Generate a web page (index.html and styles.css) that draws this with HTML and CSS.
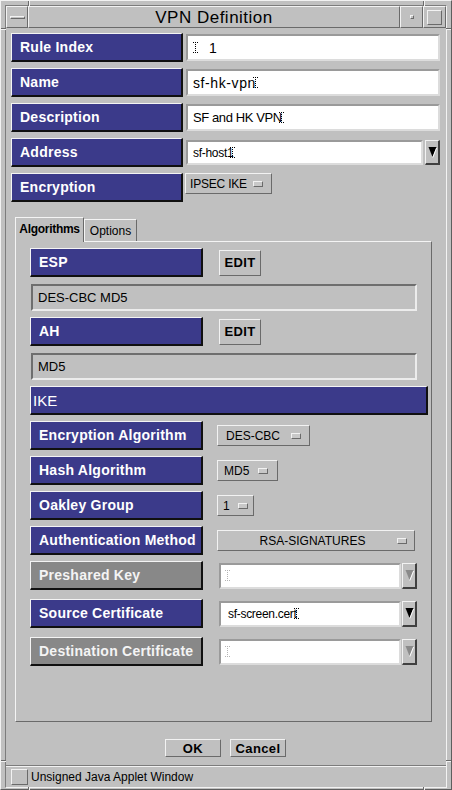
FILE: index.html
```html
<!DOCTYPE html>
<html>
<head>
<meta charset="utf-8">
<title>VPN Definition</title>
<link rel="stylesheet" href="styles.css">
</head>
<body>
<div class="window">
  <div class="inner">
    <div class="titlebar">
      <div class="tb tb-menu"><span class="tb-dash"></span></div>
      <div class="tb tb-title">VPN Definition</div>
      <div class="tb tb-min"><span class="tb-dot"></span></div>
      <div class="tb tb-max"><span class="tb-sq"></span></div>
    </div>
    <div class="client">
      <div class="form">
        <div class="row">
          <div class="label">Rule Index</div>
          <div class="field">
            <svg class="ibeam" width="5" height="11" viewBox="0 0 5 11"><path d="M0 0.5H5M2.5 0V11M0 10.5H5" stroke="#000" stroke-dasharray="1 1"/></svg>
            <span class="v-one">1</span>
          </div>
        </div>
        <div class="row">
          <div class="label">Name</div>
          <div class="field"><span class="v-name">sf-hk-vpn</span><svg class="ibeam tail" width="5" height="11" viewBox="0 0 5 11"><path d="M0 0.5H5M2.5 0V11M0 10.5H5" stroke="#000" stroke-dasharray="1 1"/></svg></div>
        </div>
        <div class="row">
          <div class="label">Description</div>
          <div class="field"><span class="v-desc">SF and HK VPN</span><svg class="ibeam tail" width="5" height="11" viewBox="0 0 5 11"><path d="M0 0.5H5M2.5 0V11M0 10.5H5" stroke="#000" stroke-dasharray="1 1"/></svg></div>
        </div>
        <div class="row">
          <div class="label">Address</div>
          <div class="combo">
            <div class="field cfield"><span class="v-small">sf-host1</span><svg class="ibeam tail" width="5" height="11" viewBox="0 0 5 11"><path d="M0 0.5H5M2.5 0V11M0 10.5H5" stroke="#000" stroke-dasharray="1 1"/></svg></div>
            <div class="drop"><svg width="11" height="14" viewBox="0 0 11 14"><polygon points="1.5,2 9.5,2 5.5,12" fill="#000"/><line x1="9.6" y1="3" x2="5.8" y2="12.5" stroke="#fff" stroke-width="1"/></svg></div>
          </div>
        </div>
        <div class="row top">
          <div class="label">Encryption</div>
          <div class="choice c-enc"><span class="ctext">IPSEC IKE</span><span class="ind"></span></div>
        </div>
      </div>

      <div class="tabs">
        <div class="tab sel">Algorithms</div>
        <div class="tab opt">Options</div>
      </div>
      <div class="panel">
        <div class="prow">
          <div class="label plabel">ESP</div>
          <div class="btn edit">EDIT</div>
        </div>
        <div class="ro">DES-CBC MD5</div>
        <div class="prow g6">
          <div class="label plabel">AH</div>
          <div class="btn edit">EDIT</div>
        </div>
        <div class="ro">MD5</div>
        <div class="ike">IKE</div>
        <div class="prow g6">
          <div class="label plabel">Encryption Algorithm</div>
          <div class="choice c-des"><span class="ctext">DES-CBC</span><span class="ind"></span></div>
        </div>
        <div class="prow g6">
          <div class="label plabel">Hash Algorithm</div>
          <div class="choice c-md5"><span class="ctext">MD5</span><span class="ind"></span></div>
        </div>
        <div class="prow g6">
          <div class="label plabel">Oakley Group</div>
          <div class="choice c-one"><span class="ctext">1</span><span class="ind"></span></div>
        </div>
        <div class="prow g6">
          <div class="label plabel">Authentication Method</div>
          <div class="choice c-auth"><span class="ctext">RSA-SIGNATURES</span><span class="ind"></span></div>
        </div>
        <div class="prow g6">
          <div class="label plabel disabled">Preshared Key</div>
          <div class="combo pcombo">
            <div class="field cfield"><svg class="ibeam" width="5" height="11" viewBox="0 0 5 11"><path d="M0 0.5H5M2.5 0V11M0 10.5H5" stroke="#b4b4b4" stroke-dasharray="1 1"/></svg></div>
            <div class="drop"><svg width="11" height="14" viewBox="0 0 11 14"><polygon points="1.5,2 9.5,2 5.5,12" fill="#8a8a8a"/><line x1="9.6" y1="3" x2="5.8" y2="12.5" stroke="#fff" stroke-width="1"/></svg></div>
          </div>
        </div>
        <div class="prow g9">
          <div class="label plabel">Source Certificate</div>
          <div class="combo pcombo">
            <div class="field cfield"><span class="v-small">sf-screen.cert</span><svg class="ibeam tail" width="5" height="11" viewBox="0 0 5 11"><path d="M0 0.5H5M2.5 0V11M0 10.5H5" stroke="#000" stroke-dasharray="1 1"/></svg></div>
            <div class="drop"><svg width="11" height="14" viewBox="0 0 11 14"><polygon points="1.5,2 9.5,2 5.5,12" fill="#000"/><line x1="9.6" y1="3" x2="5.8" y2="12.5" stroke="#fff" stroke-width="1"/></svg></div>
          </div>
        </div>
        <div class="prow g9">
          <div class="label plabel disabled">Destination Certificate</div>
          <div class="combo pcombo">
            <div class="field cfield"><svg class="ibeam" width="5" height="11" viewBox="0 0 5 11"><path d="M0 0.5H5M2.5 0V11M0 10.5H5" stroke="#b4b4b4" stroke-dasharray="1 1"/></svg></div>
            <div class="drop"><svg width="11" height="14" viewBox="0 0 11 14"><polygon points="1.5,2 9.5,2 5.5,12" fill="#8a8a8a"/><line x1="9.6" y1="3" x2="5.8" y2="12.5" stroke="#fff" stroke-width="1"/></svg></div>
          </div>
        </div>
      </div>

      <div class="btns">
        <div class="btn dlg">OK</div>
        <div class="btn dlg">Cancel</div>
      </div>
    </div>
    <div class="status">
      <span class="st-box"></span>
      <span class="st-text">Unsigned Java Applet Window</span>
    </div>
  </div>
  <span class="mark mv m-t1"></span>
  <span class="mark mv m-t2"></span>
  <span class="mark mv m-b1"></span>
  <span class="mark mv m-b2"></span>
  <span class="mark mh m-l1"></span>
  <span class="mark mh m-l2"></span>
  <span class="mark mh m-r1"></span>
  <span class="mark mh m-r2"></span>
</div>
</body>
</html>
```

FILE: styles.css
```css
html, body {
  margin: 0;
  padding: 0;
  background: #c0c0c0;
  font-family: "Liberation Sans", Arial, sans-serif;
  color: #000;
}

.window {
  position: relative;
  width: 452px;
  height: 790px;
  box-sizing: border-box;
  border: 1px solid;
  border-color: #f2f2f2 #5e5e5e #5e5e5e #f2f2f2;
  padding: 4px 4px 1px 4px;
  background: #c0c0c0;
}

.inner {
  height: 100%;
  box-sizing: border-box;
  border: 1px solid;
  border-color: #7c7c7c #f2f2f2 #f2f2f2 #7c7c7c;
  display: flex;
  flex-direction: column;
}

/* title bar */
.titlebar {
  display: flex;
  height: 22px;
  flex: none;
}
.tb {
  box-sizing: border-box;
  height: 22px;
  border: 1px solid;
  border-color: #f2f2f2 #6a6a6a #6a6a6a #f2f2f2;
  display: flex;
  align-items: center;
  justify-content: center;
}
.tb-menu { width: 22px; }
.tb-title {
  flex: 1;
  font-size: 17px;
  letter-spacing: 0.5px;
  padding-top: 1px;
}
.tb-min { width: 23px; }
.tb-max { width: 23px; }
.tb-dash {
  width: 15px;
  height: 3px;
  box-sizing: border-box;
  border: 1px solid;
  border-color: #f2f2f2 #6a6a6a #6a6a6a #f2f2f2;
}
.tb-dot {
  width: 4px;
  height: 4px;
  box-sizing: border-box;
  border: 1px solid;
  border-color: #f2f2f2 #6a6a6a #6a6a6a #f2f2f2;
}
.tb-sq {
  width: 15px;
  height: 15px;
  box-sizing: border-box;
  border: 1px solid;
  border-color: #f2f2f2 #6a6a6a #6a6a6a #f2f2f2;
}

/* client */
.client {
  flex: 1;
  display: flex;
  flex-direction: column;
  padding: 5px 6px 0 5px;
}

.form {
  display: flex;
  flex-direction: column;
  gap: 6px;
}
.row {
  display: flex;
  align-items: center;
  height: 29px;
}
.row.top { align-items: flex-start; }

.label {
  box-sizing: border-box;
  flex: none;
  width: 172px;
  height: 29px;
  background: #3b3a8a;
  color: #fff;
  font-weight: bold;
  font-size: 14px;
  letter-spacing: 0.25px;
  padding-left: 8px;
  display: flex;
  align-items: center;
  white-space: nowrap;
  border-style: solid;
  border-width: 1px 2px 2px 1px;
  border-color: #f4f4f4 #101010 #101010 #f4f4f4;
}
.label.disabled {
  background: #888888;
  color: #f4f4f4;
}

.field {
  box-sizing: border-box;
  flex: 1;
  margin-left: 3px;
  height: 27px;
  background: #fff;
  border: 2px solid;
  border-color: #9a9a9a #dcdcdc #dcdcdc #9a9a9a;
  display: flex;
  align-items: center;
  padding-left: 5px;
  font-size: 14px;
  white-space: nowrap;
}

.ibeam { flex: none; display: block; }
.ibeam.tail { margin-left: -3px; }
.v-one { margin-left: 11px; }
.v-name { letter-spacing: 0.6px; }
.v-desc { font-size: 13px; letter-spacing: -0.4px; }
.v-small { font-size: 12px; letter-spacing: -0.3px; }

.combo {
  flex: 1;
  display: flex;
  align-items: center;
  margin-left: 3px;
  height: 25px;
}
.combo .cfield {
  margin-left: 0;
  height: 25px;
}
.drop {
  box-sizing: border-box;
  flex: none;
  width: 15px;
  height: 25px;
  margin-left: 2px;
  border-style: solid;
  border-width: 1px 2px 2px 1px;
  border-color: #f2f2f2 #404040 #404040 #f2f2f2;
  display: flex;
  align-items: center;
  justify-content: center;
}

/* option menu (choice) */
.choice {
  box-sizing: border-box;
  flex: none;
  height: 21px;
  border: 1px solid;
  border-color: #f2f2f2 #6a6a6a #6a6a6a #f2f2f2;
  display: flex;
  align-items: center;
  font-size: 12px;
  white-space: nowrap;
}
.ind {
  flex: none;
  box-sizing: border-box;
  width: 10px;
  height: 6px;
  border: 1px solid;
  border-color: #f2f2f2 #6a6a6a #6a6a6a #f2f2f2;
  background: #c8c8c8;
}
.c-enc { margin-left: 2px; width: 87px; padding-left: 4px; }
.c-enc .ctext { letter-spacing: -0.2px; margin-right: 6px; }
.c-des { margin-left: 14px; width: 93px; padding-left: 8px; }
.c-des .ctext { margin-right: 11px; }
.c-md5 { margin-left: 14px; width: 61px; padding-left: 6px; }
.c-md5 .ctext { margin-right: 9px; }
.c-one { margin-left: 14px; width: 37px; padding-left: 5px; }
.c-one .ctext { margin-right: 8px; }
.c-auth { margin-left: 14px; width: 198px; padding-right: 7px; }
.c-auth .ctext { flex: 1; text-align: center; padding-left: 10px; }

/* tabs */
.tabs {
  display: flex;
  align-items: flex-end;
  margin: 15px 0 0 4px;
  height: 24px;
  flex: none;
}
.tab {
  box-sizing: border-box;
  border-style: solid;
  border-width: 1px 1px 0 1px;
  border-color: #f4f4f4 #6a6a6a transparent #f4f4f4;
  font-size: 12px;
  display: flex;
  align-items: center;
  justify-content: center;
  background: #c0c0c0;
}
.tab.sel {
  width: 69px;
  height: 25px;
  font-weight: bold;
  letter-spacing: -0.3px;
  position: relative;
  z-index: 1;
  margin-bottom: -1px;
  padding-bottom: 2px;
}
.tab.opt {
  width: 53px;
  height: 22px;
  padding-top: 1px;
}

.panel {
  box-sizing: border-box;
  flex: none;
  height: 481px;
  margin: 0 8px 0 4px;
  border: 1px solid;
  border-color: #f4f4f4 #6a6a6a #6a6a6a #f4f4f4;
  padding: 6px 0 0 14px;
  display: flex;
  flex-direction: column;
}
.prow {
  display: flex;
  align-items: center;
  height: 29px;
  flex: none;
}
.prow.g6 { margin-top: 6px; }
.prow.g9 { margin-top: 9px; }
.plabel { width: 173px; }

.btn {
  box-sizing: border-box;
  border: 1px solid;
  border-color: #f2f2f2 #6a6a6a #6a6a6a #f2f2f2;
  display: flex;
  align-items: center;
  justify-content: center;
  font-weight: bold;
  font-size: 13px;
  letter-spacing: 0.4px;
}
.edit {
  margin-left: 16px;
  width: 42px;
  height: 26px;
}

.ro {
  box-sizing: border-box;
  flex: none;
  margin: 7px 0 0 1px;
  width: 386px;
  height: 27px;
  border: 2px solid;
  border-color: #6e6e6e #ececec #ececec #6e6e6e;
  font-size: 13px;
  display: flex;
  align-items: center;
  padding-left: 5px;
}

.ike {
  box-sizing: border-box;
  flex: none;
  margin-top: 6px;
  width: 398px;
  height: 29px;
  background: #3b3a8a;
  color: #fff;
  font-size: 15px;
  display: flex;
  align-items: center;
  padding-left: 2px;
  border-style: solid;
  border-width: 1px 2px 2px 1px;
  border-color: #f4f4f4 #101010 #101010 #f4f4f4;
}

.pcombo {
  margin-left: 16px;
  flex: none;
  width: 198px;
  height: 26px;
}
.pcombo .cfield { height: 26px; padding-left: 4px; }
.pcombo .v-small { padding-left: 3px; }
.pcombo .drop { margin-left: 1px; height: 26px; }

/* dialog buttons */
.btns {
  display: flex;
  justify-content: center;
  gap: 9px;
  margin-top: 17px;
}
.dlg {
  width: 56px;
  height: 18px;
}

/* status bar */
.status {
  flex: none;
  height: 22px;
  box-sizing: border-box;
  border-top: 1px solid #7c7c7c;
  box-shadow: inset 0 1px 0 #f2f2f2;
  display: flex;
  align-items: center;
  padding-left: 5px;
}
.st-box {
  box-sizing: border-box;
  width: 17px;
  height: 16px;
  border: 1px solid;
  border-color: #f2f2f2 #6a6a6a #6a6a6a #f2f2f2;
  margin-right: 3px;
}
.st-text {
  font-size: 12px;
  padding-top: 1px;
}

/* frame resize-corner marks */
.mark {
  position: absolute;
  background: #6a6a6a;
}
.mv { width: 1px; height: 5px; box-shadow: 1px 0 0 #f2f2f2; }
.mh { height: 1px; width: 5px; box-shadow: 0 1px 0 #f2f2f2; }
.m-t1 { left: 27px; top: 0; }
.m-t2 { left: 422px; top: 0; }
.m-b1 { left: 27px; bottom: -1px; height: 3px; }
.m-b2 { left: 422px; bottom: -1px; height: 3px; }
.m-l1 { left: 0; top: 27px; }
.m-l2 { left: 0; top: 759px; }
.m-r1 { right: 0; top: 27px; }
.m-r2 { right: 0; top: 759px; }
```
